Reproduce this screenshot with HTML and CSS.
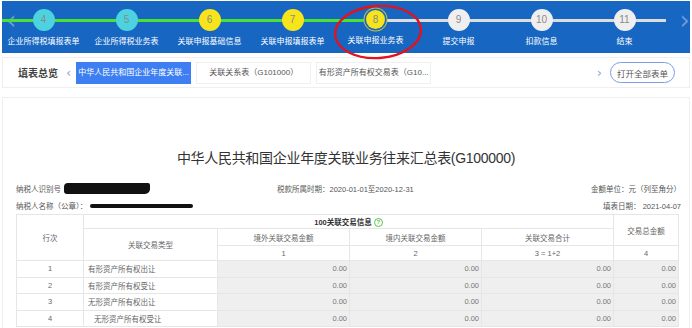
FILE: index.html
```html
<!DOCTYPE html>
<html lang="zh-CN">
<head>
    <meta charset="UTF-8">
    <meta name="viewport" content="width=device-width, initial-scale=1.0">
    <title>关联业务往来汇总表</title>
    <link rel="stylesheet" href="styles.css">
</head>
<body>
    <header class="steps-bar">
        <span class="arrow arrow-left">&#8249;</span>
        <div class="steps">
            <div class="track"></div>
            <div class="step done"><span class="dot">4</span><span class="label">企业所得税填报表单</span></div>
            <div class="step done"><span class="dot">5</span><span class="label">企业所得税业务表</span></div>
            <div class="step filled"><span class="dot">6</span><span class="label">关联申报基础信息</span></div>
            <div class="step filled"><span class="dot">7</span><span class="label">关联申报填报表单</span></div>
            <div class="step filled current"><span class="dot">8</span><span class="label">关联申报业务表</span></div>
            <div class="step"><span class="dot">9</span><span class="label">提交申报</span></div>
            <div class="step"><span class="dot">10</span><span class="label">扣款信息</span></div>
            <div class="step"><span class="dot">11</span><span class="label">结束</span></div>
        </div>
        <span class="arrow arrow-right">&#8250;</span>
        <!-- hand drawn mark around the current step -->
        <svg class="mark" width="92" height="60" viewBox="0 0 92 60">
            <ellipse cx="46" cy="30" rx="43" ry="26" transform="rotate(-4 46 30)" fill="none" stroke="#e3121d" stroke-width="2.4"/>
        </svg>
    </header>

    <nav class="tabs-bar">
        <span class="tabs-title">填表总览</span>
        <span class="tab-arrow">&#8249;</span>
        <div class="tabs">
            <span class="tab active">中华人民共和国企业年度关联...</span>
            <span class="tab">关联关系表（G101000）</span>
            <span class="tab">有形资产所有权交易表（G10...</span>
        </div>
        <span class="tab-arrow right">&#8250;</span>
        <button class="open-all">打开全部表单</button>
    </nav>

    <main class="sheet">
        <h1 class="sheet-title">中华人民共和国企业年度关联业务往来汇总表(G100000)</h1>
        <div class="info-row">
            <div class="info-left">纳税人识别号 <span class="blot blot-id"></span></div>
            <div class="info-mid">税款所属时期：2020-01-01至2020-12-31</div>
            <div class="info-right">金额单位：元（列至角分）</div>
        </div>
        <div class="info-row">
            <div class="info-left">纳税人名称（公章）： <span class="blot blot-name"></span></div>
            <div class="info-right">填表日期： 2021-04-07</div>
        </div>

        <table class="grid">
            <colgroup>
                <col style="width:67px">
                <col style="width:134px">
                <col style="width:132px">
                <col style="width:132px">
                <col style="width:132px">
                <col style="width:65px">
            </colgroup>
            <tr class="r1">
                <td rowspan="3">行次</td>
                <td colspan="4" class="group">100关联交易信息 <span class="help">?</span></td>
                <td rowspan="2">交易总金额</td>
            </tr>
            <tr class="r2">
                <td rowspan="2">关联交易类型</td>
                <td>境外关联交易金额</td>
                <td>境内关联交易金额</td>
                <td>关联交易合计</td>
            </tr>
            <tr class="r3">
                <td>1</td>
                <td>2</td>
                <td>3 = 1+2</td>
                <td>4</td>
            </tr>
            <tr class="row">
                <td>1</td><td class="name">有形资产所有权出让</td>
                <td class="amt">0.00</td><td class="amt">0.00</td><td class="amt">0.00</td><td class="amt">0.00</td>
            </tr>
            <tr class="row">
                <td>2</td><td class="name">有形资产所有权受让</td>
                <td class="amt">0.00</td><td class="amt">0.00</td><td class="amt">0.00</td><td class="amt">0.00</td>
            </tr>
            <tr class="row">
                <td>3</td><td class="name">无形资产所有权出让</td>
                <td class="amt">0.00</td><td class="amt">0.00</td><td class="amt">0.00</td><td class="amt">0.00</td>
            </tr>
            <tr class="row">
                <td>4</td><td class="name indent">无形资产所有权受让</td>
                <td class="amt">0.00</td><td class="amt">0.00</td><td class="amt">0.00</td><td class="amt">0.00</td>
            </tr>
        </table>
    </main>
</body>
</html>
```

FILE: styles.css
```css
body {
    margin: 0;
    padding: 1px 2px 0 2px;
    background-color: #fff;
    font-family: "Liberation Sans", "Noto Sans CJK SC", sans-serif;
    color: #555;
    overflow: hidden;
    height: 327px;
}

/* step bar */
.steps-bar {
    position: relative;
    display: flex;
    height: 52px;
    width: 688px;
    background-color: #1766c2;
}

.steps {
    position: relative;
    display: flex;
    width: 664px;
}

.track {
    position: absolute;
    left: 0;
    right: 0;
    top: 18px;
    height: 3px;
    background: linear-gradient(to right, #4be233 0, #4be233 373px, #dcdcdc 373px);
}

.step {
    position: relative;
    width: 83px;
    display: flex;
    flex-direction: column;
    align-items: center;
}

.dot {
    margin-top: 8px;
    width: 22px;
    height: 22px;
    border-radius: 50%;
    background-color: #efefef;
    color: #8a8a8a;
    font-size: 10px;
    line-height: 22px;
    text-align: center;
}

.step.done .dot {
    background-color: #4dd3df;
}

.step.filled .dot {
    background-color: #f7e41b;
}

.step.current .dot {
    width: 19px;
    height: 19px;
    line-height: 19px;
    margin-top: 9px;
    margin-bottom: 1px;
    box-shadow: 0 0 0 1.5px #1766c2, 0 0 0 2.5px #c8c23b;
}

.label {
    margin-top: 4px;
    color: #fff;
    font-size: 8px;
    white-space: nowrap;
}

.arrow {
    position: absolute;
    top: 8px;
    color: #6f9ad6;
    font-size: 26px;
    line-height: 22px;
    font-family: "DejaVu Sans", sans-serif;
}

.arrow-left {
    left: 4px;
}

.arrow-right {
    right: 0;
}

.mark {
    position: absolute;
    left: 330px;
    top: 1px;
}

/* tabs */
.tabs-bar {
    display: flex;
    align-items: center;
    width: 686px;
    height: 29px;
    margin-top: 4px;
    border: 1px solid #efefef;
    background-color: #fff;
}

.tabs-title {
    margin-left: 15px;
    font-size: 10px;
    color: #444;
    font-weight: bold;
}

.tab-arrow {
    margin-left: 8px;
    color: #8aa6e0;
    font-size: 13px;
    font-family: "DejaVu Sans", sans-serif;
}

.tab-arrow.right {
    margin-left: auto;
}

.tabs {
    display: flex;
    gap: 5px;
    margin-left: 5px;
}

.tab {
    width: 113px;
    height: 20px;
    line-height: 20px;
    border: 1px solid #f0f0f0;
    font-size: 8px;
    color: #555;
    text-align: center;
    white-space: nowrap;
    overflow: hidden;
}

.tab.active {
    background-color: #3d7ff3;
    border-color: #3d7ff3;
    color: #fff;
}

.open-all {
    margin-left: 8px;
    margin-right: 14px;
    width: 65px;
    height: 21px;
    border: 1px solid #7d9ce6;
    border-radius: 11px;
    background-color: #fff;
    color: #555;
    font-family: "Noto Sans CJK SC", sans-serif;
    font-size: 8.5px;
    padding: 0;
}

/* sheet */
.sheet {
    width: 686px;
    margin-top: 9px;
    border: 1px solid #efefef;
    height: 240px;
}

.sheet-title {
    margin: 49px 0 13px 0;
    text-align: center;
    font-size: 14px;
    font-weight: normal;
    color: #333;
    letter-spacing: -0.3px;
}

.info-row {
    display: flex;
    align-items: center;
    height: 17px;
    padding: 0 8px 0 13px;
    font-size: 7.5px;
    color: #555;
}

.info-left {
    width: 261px;
    display: flex;
    align-items: center;
}

.info-mid {
    flex: 1;
}

.info-right {
    margin-left: auto;
}

.blot {
    display: inline-block;
    background-color: #111;
    margin-left: 3px;
}

.blot-id {
    width: 86px;
    height: 11px;
    border-radius: 4px 2px 5px 3px;
}

.blot-name {
    width: 103px;
    height: 4px;
    border-radius: 2px;
}

.grid {
    margin: 0 0 0 13px;
    border-collapse: collapse;
    table-layout: fixed;
    width: 662px;
    font-size: 7.5px;
    color: #666;
}

.grid td {
    border: 1px solid #e6e6e6;
    text-align: center;
    padding: 0 2px;
    white-space: nowrap;
}

.r1 td { height: 13px; }
.r2 td { height: 16px; }
.r3 td { height: 14px; }
.row td { height: 15.5px; }

.group {
    color: #333;
    font-weight: bold;
}

.help {
    display: inline-block;
    width: 7px;
    height: 7px;
    line-height: 7px;
    border: 1px solid #5cc24a;
    border-radius: 50%;
    color: #5cc24a;
    font-size: 6px;
    vertical-align: middle;
}

.grid td.name {
    text-align: left;
    padding-left: 4px;
}

.grid td.name.indent {
    padding-left: 10px;
}

.grid td.amt {
    text-align: right;
    background-color: #efefef;
    color: #777;
}
```
